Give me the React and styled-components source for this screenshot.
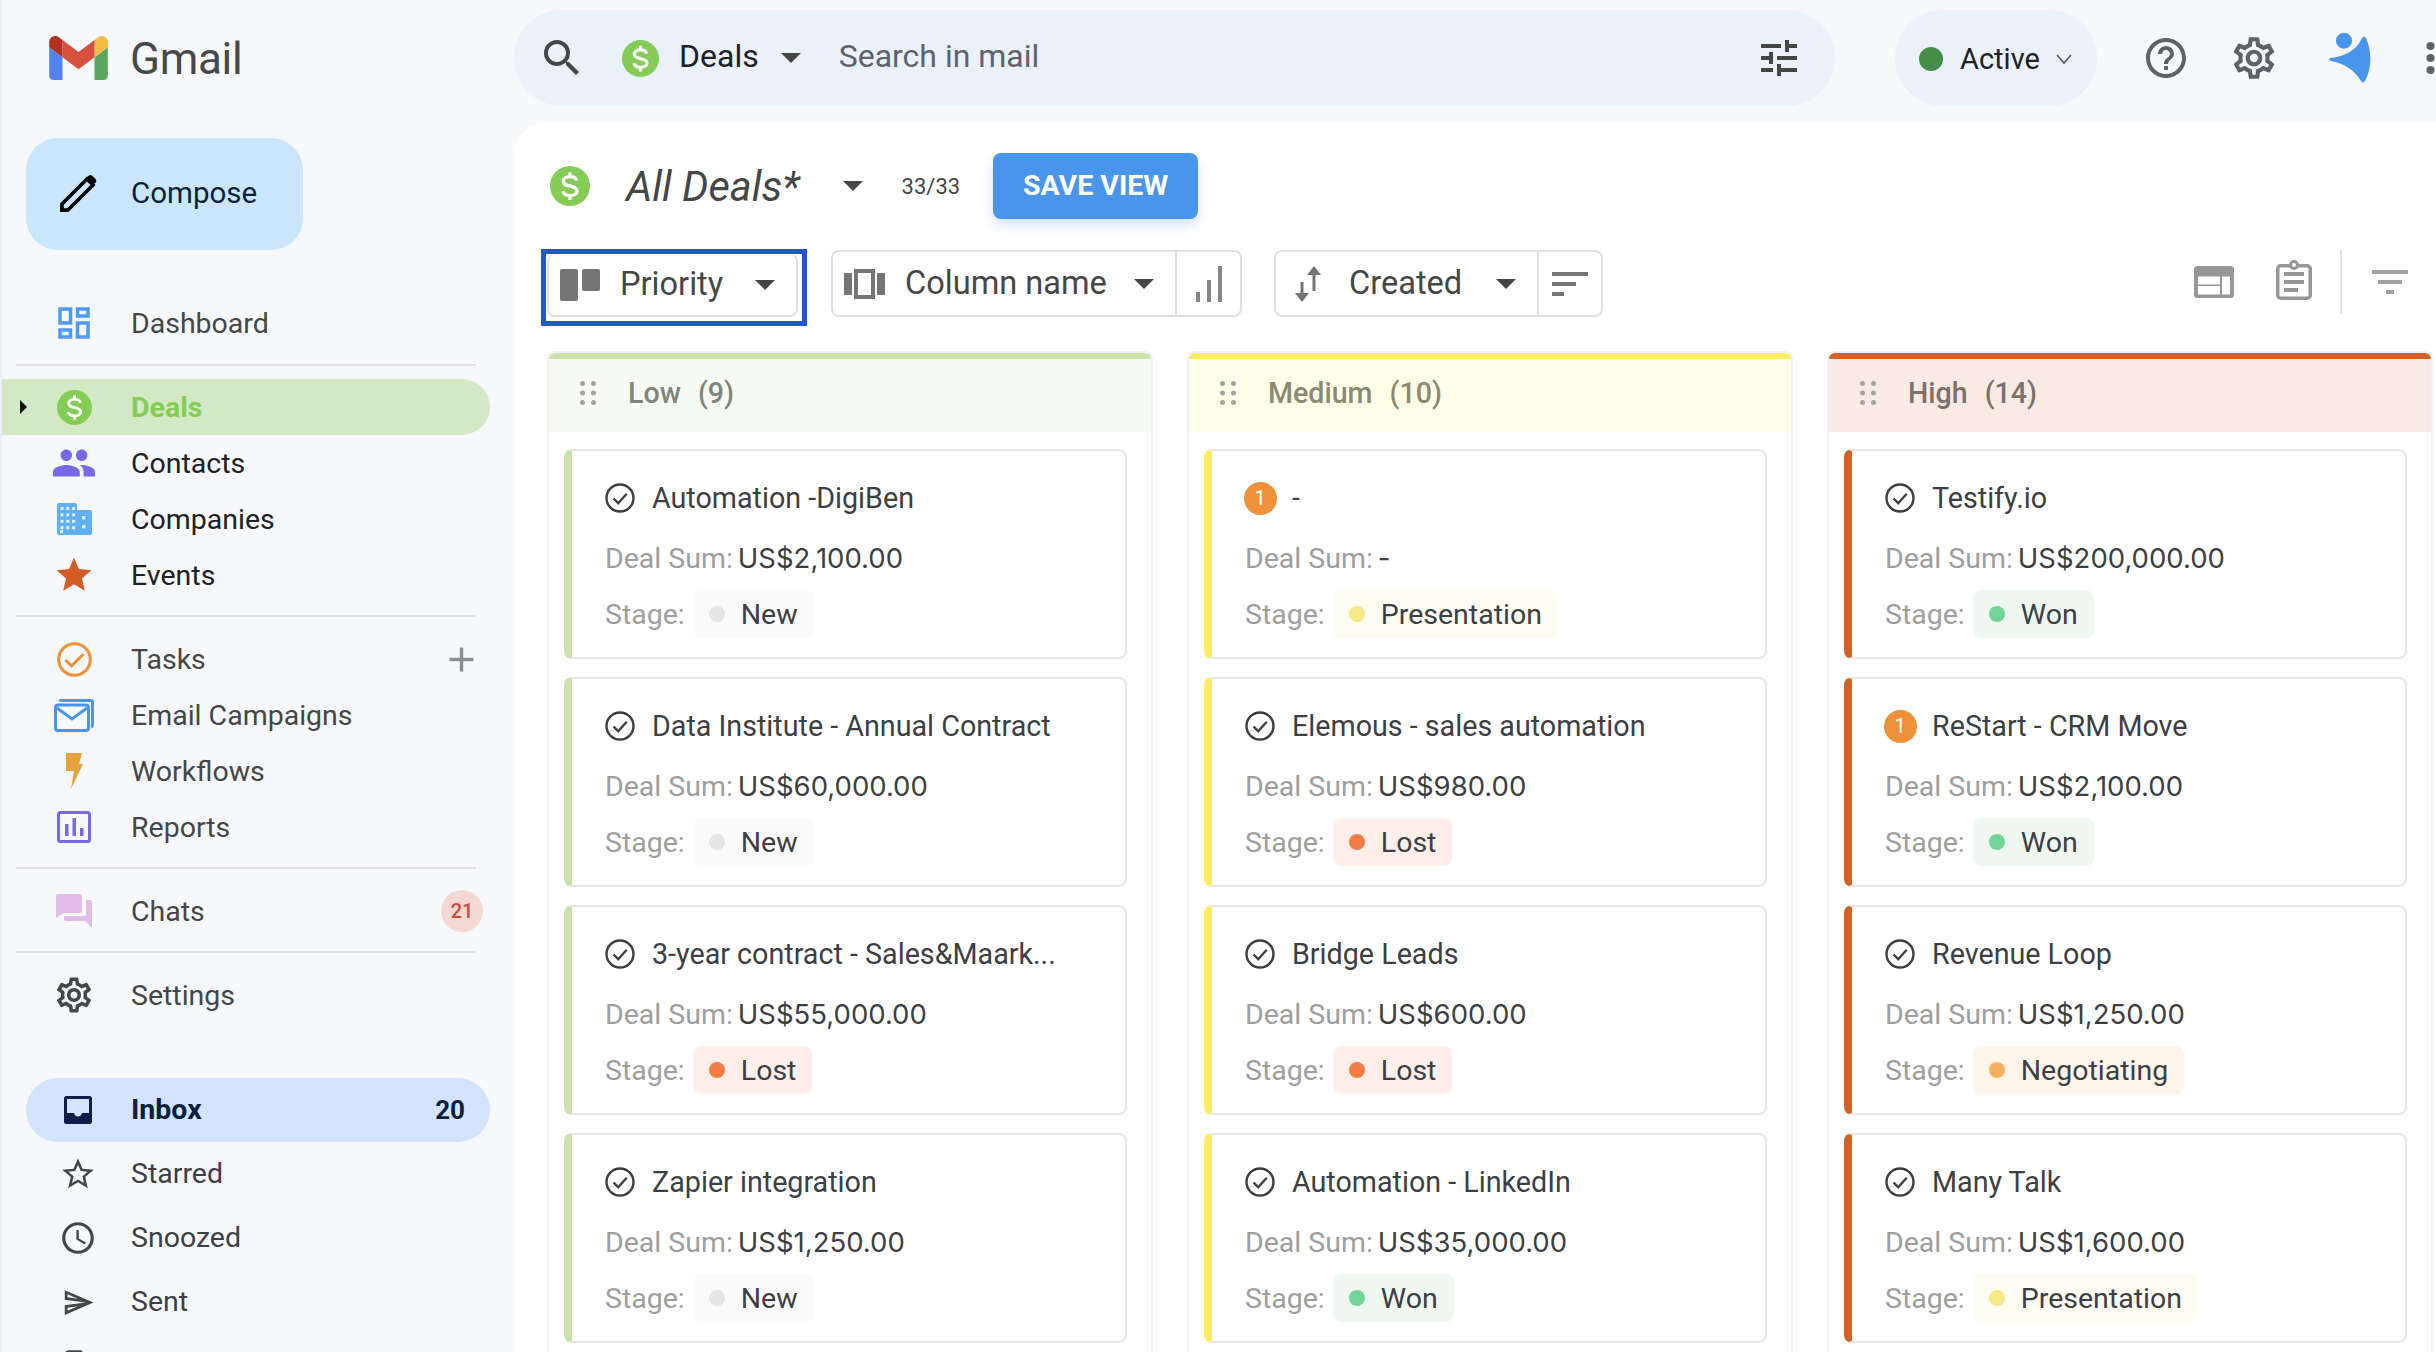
import styled, { createGlobalStyle } from 'styled-components';
import {
  MdAccessTime,
  MdAdd,
  MdHelpOutline,
  MdOutlineDashboard,
  MdOutlineInsertDriveFile,
  MdOutlineSend,
  MdOutlineSettings,
  MdPeople,
  MdSearch,
  MdStar,
  MdStarBorder,
  MdTune,
} from 'react-icons/md';

const GlobalStyle = createGlobalStyle`
  html, body {
    margin: 0;
    padding: 0;
    width: 2436px;
    height: 1352px;
    overflow: hidden;
    background: #f6f8fc;
    font-family: Roboto, "Liberation Sans", sans-serif;
    color: #3c4043;
  }
`;

const Page = styled.div`
  display: flex;
  width: 2436px;
  height: 1352px;
  overflow: hidden;
`;

/* sidebar */

const Sidebar = styled.aside`
  flex: 0 0 512px;
  border-left: 2px solid #e8f0fb;
  height: 1352px;
  overflow: hidden;
`;

const LogoRow = styled.div`
  display: flex;
  align-items: center;
  gap: 22px;
  height: 44px;
  padding: 36px 0 0 47px;
`;

const LogoText = styled.span`
  margin-top: 2px;
  font-size: 44px;
  line-height: 44px;
  color: #46494b;
  letter-spacing: -0.3px;
`;

const Compose = styled.button`
  display: flex;
  align-items: center;
  gap: 34px;
  width: 277px;
  height: 112px;
  margin: 58px 0 45px 24px;
  padding: 0 0 2px 34px;
  border: 0;
  border-radius: 32px;
  background: #c9e6fc;
  color: #0b1f3f;
  font: 400 29.5px Roboto, sans-serif;
`;

const NavRow = styled.div`
  position: relative;
  display: flex;
  align-items: center;
  gap: 37px;
  width: 488px;
  height: 56px;
  box-sizing: border-box;
  padding-left: 52px;
  font-size: 28.5px;
  color: ${({ $color }) => $color || '#444746'};
  font-weight: ${({ $bold }) => ($bold ? 700 : 400)};
  background: ${({ $bg }) => $bg || 'transparent'};
  border-radius: 0 28px 28px 0;
`;

const NavIcon = styled.span`
  flex: 0 0 40px;
  min-width: 0;
  display: flex;
  align-items: center;
  justify-content: center;
  height: 40px;
  color: ${({ $color }) => $color || '#444746'};

  svg {
    flex: none;
  }
`;

const NavLabel = styled.span`
  flex: 1;
`;

const RowArrow = styled.span`
  position: absolute;
  left: 18px;
  top: 21px;
  width: 0;
  height: 0;
  border-style: solid;
  border-width: 7px 0 7px 7px;
  border-color: transparent transparent transparent #111;
`;

const Divider = styled.div`
  width: 460px;
  height: 2px;
  margin: ${({ $my }) => $my || '12px'} 0 ${({ $my }) => $my || '14px'} 14px;
  background: #e0e0e0;
`;

const RowAdd = styled.span`
  display: flex;
  margin-right: 8px;
  color: #8b8d8f;
`;

const CountBadge = styled.span`
  width: 42px;
  height: 42px;
  margin-right: 7px;
  border-radius: 50%;
  background: #f4d8d4;
  color: #cb4b3b;
  font-size: 20px;
  font-weight: 500;
  line-height: 42px;
  text-align: center;
`;

const MailList = styled.div`
  margin-top: 55px;
`;

const MailRow = styled.div`
  display: flex;
  align-items: center;
  gap: 37px;
  width: 464px;
  height: 64px;
  box-sizing: border-box;
  margin-left: 24px;
  padding: 0 25px 0 36px;
  border-radius: 32px;
  font-size: 28.5px;
  font-weight: ${({ $active }) => ($active ? 700 : 400)};
  color: ${({ $active }) => ($active ? '#0b1f3f' : '#3c4043')};
  background: ${({ $active }) => ($active ? '#d3e3fd' : 'transparent')};
`;

const MailIcon = styled.span`
  flex: 0 0 32px;
  min-width: 0;
  display: flex;
  align-items: center;
  justify-content: center;
  color: #444746;

  svg {
    flex: none;
  }
`;

const MailLabel = styled.span`
  flex: 1;
  margin-top: -2px;
`;

const MailCount = styled.span`
  font-size: 26px;
  font-weight: 700;
`;

/* top bar */

const Main = styled.main`
  flex: 1;
  min-width: 0;
  display: flex;
  flex-direction: column;
`;

const TopBar = styled.header`
  flex: 0 0 112px;
  display: flex;
  align-items: flex-start;
  padding-top: 10px;
`;

const SearchBar = styled.div`
  display: flex;
  align-items: center;
  width: 1321px;
  height: 96px;
  box-sizing: border-box;
  padding: 0 32px 0 24px;
  border-radius: 48px;
  background: #eaf1fb;
  font-size: 32px;
`;

const SearchScope = styled.span`
  margin: -4px 22px 0 20px;
  color: #202124;
`;

const Caret = styled.span`
  flex: none;
  width: 0;
  height: 0;
  border-style: solid;
  border-width: 10px 10px 0;
  border-color: #444746 transparent transparent;
`;

const SearchHint = styled.span`
  flex: 1;
  margin: -4px 0 0 38px;
  color: #5f6368;
`;

const IconSlot = styled.span`
  display: flex;
  margin: ${({ $m }) => $m || 0};
  color: ${({ $color }) => $color || '#444746'};
`;

const StatusPill = styled.div`
  display: flex;
  align-items: center;
  width: 202px;
  height: 96px;
  box-sizing: border-box;
  margin: 0 45px 0 60px;
  padding: 2px 0 0 24px;
  border-radius: 48px;
  background: #eaf1fb;
  color: #202124;
  font-size: 29px;
`;

const StatusDot = styled.span`
  width: 24px;
  height: 24px;
  margin-right: 17px;
  border-radius: 50%;
  background: #458f4a;
`;

const TopIcons = styled.div`
  display: flex;
  align-items: center;
  height: 96px;
`;

/* board panel */

const Panel = styled.section`
  flex: 1;
  background: #fff;
  border-top-left-radius: 32px;
  overflow: hidden;
`;

const TitleRow = styled.div`
  display: flex;
  align-items: center;
  height: 66px;
  padding: 31px 0 0 36px;
`;

const ViewTitle = styled.h1`
  margin: 0 43px 0 36px;
  font-size: 41.5px;
  font-weight: 400;
  font-style: italic;
  color: #444746;
`;

const ViewCount = styled.span`
  margin: 0 33px 0 39px;
  font-size: 22px;
  color: #444746;
`;

const SaveButton = styled.button`
  width: 205px;
  height: 66px;
  padding: 0 0 2px;
  border: 0;
  border-radius: 8px;
  background: #4a95ec;
  color: #fff;
  font: 700 28.5px Roboto, sans-serif;
  box-shadow: 0 6px 12px rgba(74, 149, 236, 0.25);
`;

const Toolbar = styled.div`
  display: flex;
  align-items: flex-start;
  height: 77px;
  margin-top: 30px;
  padding-left: 27px;
`;

const Outline = styled.div`
  border: 5px solid #2255d0;
  padding: 0 4px 4px 1px;
`;

const ToolGroup = styled.div`
  display: flex;
  align-items: stretch;
  width: ${({ $w }) => $w}px;
  height: ${({ $h }) => $h || 67}px;
  box-sizing: border-box;
  margin: ${({ $m }) => $m || 0};
  border: 2px solid #e0e0e0;
  border-top-width: ${({ $flatTop }) => ($flatTop ? 0 : 2)}px;
  border-radius: 8px;
  font-size: 32.6px;
  color: #444746;
`;

const ToolMain = styled.div`
  flex: 1;
  display: flex;
  align-items: center;
  padding: 0 ${({ $pr }) => $pr || 21}px 0 ${({ $pl }) => $pl}px;
`;

const ToolLabel = styled.span`
  flex: 1;
  margin: -2px 0 0 ${({ $ml }) => $ml}px;
`;

const ToolEnd = styled.div`
  flex: 0 0 auto;
  width: ${({ $w }) => $w}px;
  display: flex;
  align-items: center;
  justify-content: center;
  border-left: 2px solid #e0e0e0;
`;

const ToolRight = styled.div`
  display: flex;
  align-items: center;
  height: 64px;
  margin: 1px 0 0 auto;
  padding-right: 28px;
`;

const VRule = styled.span`
  width: 2px;
  height: 64px;
  margin: 0 30px 0 28px;
  background: #e2e2e2;
`;

const Board = styled.div`
  display: grid;
  grid-template-columns: repeat(3, 606px);
  gap: 34px;
  margin-top: 25px;
  padding-left: 33px;
`;

const Column = styled.div`
  box-sizing: border-box;
  height: 1100px;
  border: 2px solid #f1f1f1;
  border-bottom: 0;
  border-radius: 8px 8px 0 0;
`;

const ColumnHead = styled.div`
  display: flex;
  align-items: center;
  height: 79px;
  box-sizing: border-box;
  padding: 0 0 5px 31px;
  border-top: 6px solid ${({ $accent }) => $accent};
  border-radius: 6px 6px 0 0;
  background: ${({ $tint }) => $tint};
  color: ${({ $ink }) => $ink};
  font-size: 28.6px;
  font-weight: 500;
`;

const ColumnName = styled.span`
  margin-left: 32px;
`;

const ColumnCount = styled.span`
  margin-left: 17px;
`;

const CardList = styled.div`
  display: flex;
  flex-direction: column;
  gap: 18px;
  padding: 17px 24px 0 15px;
`;

const Card = styled.article`
  height: 210px;
  box-sizing: border-box;
  padding: 27px 0 0 33px;
  border: 2px solid #e6e6e6;
  border-left: 8px solid ${({ $accent }) => $accent};
  border-radius: 8px;
  font-size: 28.5px;
  color: #3c4043;
`;

const CardTitle = styled.div`
  display: flex;
  align-items: center;
  gap: 17px;
  height: 40px;
  font-size: 28.7px;
`;

const NewBadge = styled.span`
  flex: none;
  width: 33px;
  height: 33px;
  margin: 0 -1.5px;
  border-radius: 50%;
  background: #ee9139;
  color: #fff;
  font-size: 20px;
  line-height: 33px;
  text-align: center;
`;

const SumRow = styled.div`
  display: flex;
  align-items: center;
  gap: 5px;
  height: 40px;
  margin-top: 20px;
`;

const SumValue = styled.span`
  font-family: Inter, Roboto, sans-serif;
  font-size: 27.5px;
`;

const FieldLabel = styled.span`
  color: #9e9e9e;
`;

const StageRow = styled.div`
  display: flex;
  align-items: center;
  gap: 8px;
  height: 48px;
  margin-top: 12px;
`;

const StagePill = styled.span`
  display: flex;
  align-items: center;
  gap: 16px;
  height: 48px;
  box-sizing: border-box;
  padding: 0 16px;
  border-radius: 8px;
  background: ${({ $tint }) => $tint};
`;

const StageDot = styled.span`
  width: 16px;
  height: 16px;
  border-radius: 50%;
  background: ${({ $color }) => $color};
`;

/* drawings */

function GmailLogo() {
  return (
    <svg width="59" height="44" viewBox="52 42 88 66">
      <path fill="#5383ec" d="M58 108h14V74L52 59v43c0 3.32 2.69 6 6 6" />
      <path fill="#58a75e" d="M120 108h14c3.32 0 6-2.69 6-6V59l-20 15" />
      <path fill="#f2bd42" d="M120 48v26l20-15v-8c0-7.42-8.47-11.65-14.4-7.2" />
      <path fill="#d85140" d="M72 74V48l24 18 24-18v26L96 92" />
      <path fill="#b23121" d="M52 51v8l20 15V48l-5.6-4.2c-5.94-4.45-14.4-.22-14.4 7.2" />
    </svg>
  );
}

function Pencil() {
  return (
    <svg width="37" height="37" viewBox="0 0 37 37">
      <path d="M2 35v-6L27 4l6 6L8 35z" fill="none" stroke="#000" strokeWidth="3.6" />
      <path d="M26 3l3-2.5q1.5-.8 3 0l3.8 3.8q1 1.6 0 3L33 10z" fill="#000" />
      <path d="M0 30l7 7H0z" fill="#000" />
    </svg>
  );
}

function Dollar({ size = 35 }) {
  return (
    <svg width={size} height={size} viewBox="0 0 36 36" style={{ flex: 'none' }}>
      <circle cx="18" cy="18" r="18" fill="#84cc55" />
      <path
        d="M24 13.2c-.6-2.4-3-3.6-6-3.6-3.3 0-6 1.6-6 4.2 0 5.8 12.400 3 12.400 8.600 0 2.700-2.900 4.200-6.400 4.200-3.300 0-5.800-1.500-6.400-4M18 5.600v4M18 26.600v4"
        fill="none"
        stroke="#fff"
        strokeWidth="3"
      />
    </svg>
  );
}

function Building() {
  const cells = [];
  for (let r = 0; r < 4; r++) for (let c = 0; c < 3; c++) cells.push([3.5 + c * 5.8, 4 + r * 6.4]);
  return (
    <svg width="35" height="32" viewBox="0 0 35 32">
      <path d="M2 0h16a2 2 0 0 1 2 2v5h13a2 2 0 0 1 2 2v21a2 2 0 0 1-2 2H2a2 2 0 0 1-2-2V2a2 2 0 0 1 2-2z" fill="#5fb0f7" />
      {cells.map(([x, y]) => (
        <rect key={`${x}-${y}`} x={x} y={y} width="3" height="3" fill="#e4f1fe" />
      ))}
      <rect x="25" y="13" width="3.4" height="3.4" fill="#e4f1fe" />
      <rect x="25" y="22" width="3.4" height="3.4" fill="#e4f1fe" />
      <rect x="3" y="27" width="3" height="3" fill="#e4f1fe" />
    </svg>
  );
}

function TaskCircle() {
  return (
    <svg width="35" height="35" viewBox="0 0 35 35" fill="none" stroke="#ee9139">
      <circle cx="17.5" cy="17.5" r="15.8" strokeWidth="3" />
      <path d="M8.5 18l6 6 12-12" strokeWidth="3" />
    </svg>
  );
}

function Campaign() {
  return (
    <svg width="40" height="33" viewBox="0 0 40 33" fill="none" stroke="#4a95ec" strokeWidth="3">
      <path d="M6 2.5q0-1 1-1h30q1.500 0 1.500 1.500v23q0 1.500-1.500 2" />
      <rect x="1.500" y="6" width="33" height="25.500" rx="2.500" />
      <path d="M3 9l15 11 15-11" />
    </svg>
  );
}

function Bolt() {
  return (
    <svg width="18" height="36" viewBox="0 0 18 36">
      <path d="M1 0h16l-3 11h4L6 36l3-18H1z" fill="#e8a23a" />
    </svg>
  );
}

function ReportBox() {
  return (
    <svg width="34" height="32" viewBox="0 0 34 32">
      <rect x="1.500" y="1.500" width="31" height="29" rx="2" fill="none" stroke="#7a68e8" strokeWidth="3" />
      <rect x="8" y="13" width="3.500" height="12" fill="#7a68e8" />
      <rect x="15.500" y="7" width="3.500" height="18" fill="#7a68e8" />
      <rect x="23" y="17" width="3.500" height="8" fill="#7a68e8" />
    </svg>
  );
}

function ChatBubbles() {
  return (
    <svg width="36" height="34" viewBox="0 0 36 34" fill="#e3bce8">
      <path d="M2 0h22a2 2 0 0 1 2 2v15a2 2 0 0 1-2 2H8l-8 5V2a2 2 0 0 1 2-2z" />
      <path d="M30 6h4a2 2 0 0 1 2 2v26l-7-7H10q-2 0-2-2v-3h21q1 0 1-1z" />
    </svg>
  );
}

function InboxGlyph() {
  return (
    <svg width="28" height="28" viewBox="0 0 28 28">
      <rect width="28" height="28" rx="2.500" fill="#0e1d4a" />
      <path d="M3 3h22v14h-7c-.6 2.400-2 3.500-4 3.500s-3.400-1.100-4-3.500H3z" fill="#d3e3fd" />
    </svg>
  );
}

function ThinChevron() {
  return (
    <svg width="16" height="10" viewBox="0 0 16 10" fill="none" stroke="#5f6368" strokeWidth="1.800">
      <path d="M1 1l7 8 7-8" />
    </svg>
  );
}

function BlueMark() {
  return (
    <svg width="42" height="52" viewBox="0 0 42 52" fill="#4a95ec">
      <circle cx="15" cy="8.700" r="8" />
      <path d="M1 26C12 25 27 20 33 6q2-3 4 0c6 14 6 30-1 43q-2 3-4 0C26 38 14 31 2 29q-3-1.500-1-3z" />
    </svg>
  );
}

function MoreDots() {
  return (
    <svg width="9" height="32" viewBox="0 0 9 32" fill="#5f6368">
      <circle cx="4.500" cy="4" r="4" />
      <circle cx="4.500" cy="16" r="4" />
      <circle cx="4.500" cy="28" r="4" />
    </svg>
  );
}

function PriorityGlyph() {
  return (
    <svg width="40" height="32" viewBox="0 0 40 32" fill="#757575">
      <rect width="18" height="32" rx="2" />
      <rect x="22" width="18" height="22" rx="2" />
    </svg>
  );
}

function ColumnGlyph() {
  return (
    <svg width="41" height="30" viewBox="0 0 41 30" fill="#757575">
      <rect x="0" y="4" width="8" height="22" />
      <rect x="33" y="4" width="8" height="22" />
      <rect x="12" y="2" width="17" height="26" fill="none" stroke="#757575" strokeWidth="4" />
    </svg>
  );
}

function BarsGlyph() {
  return (
    <svg width="26" height="36" viewBox="0 0 26 36" fill="#858585">
      <rect x="0" y="26" width="4" height="10" />
      <rect x="11" y="14" width="4" height="22" />
      <rect x="22" y="0" width="4" height="36" />
    </svg>
  );
}

function SortArrows() {
  return (
    <svg width="28" height="36" viewBox="0 0 28 36" fill="#757575">
      <rect x="6.500" y="16" width="3" height="14" />
      <path d="M1 27h14l-7 9z" />
      <rect x="18.500" y="8" width="3" height="17" />
      <path d="M13 9h14L20 0z" />
    </svg>
  );
}

function SortLines() {
  return (
    <svg width="36" height="24" viewBox="0 0 36 24" fill="#757575">
      <rect width="36" height="4" />
      <rect y="10" width="24" height="4" />
      <rect y="20" width="12" height="4" />
    </svg>
  );
}

function LayoutGlyph() {
  return (
    <svg width="40" height="32" viewBox="0 0 40 32">
      <rect width="40" height="32" rx="3.500" fill="#969696" />
      <rect x="4" y="10.500" width="22" height="8" fill="#fff" />
      <rect x="4" y="20" width="22" height="8.500" fill="#fff" />
      <rect x="28" y="10.500" width="8" height="18" fill="#fff" />
    </svg>
  );
}

function ClipboardGlyph() {
  return (
    <svg width="36" height="40" viewBox="0 0 36 40">
      <rect x="1.750" y="5.750" width="32.500" height="32.500" rx="3" fill="none" stroke="#969696" strokeWidth="3.500" />
      <circle cx="18" cy="5" r="5" fill="#969696" />
      <circle cx="18" cy="5" r="2" fill="#fff" />
      <rect x="8" y="12" width="20" height="4" fill="#969696" />
      <rect x="8" y="20" width="20" height="4" fill="#969696" />
      <rect x="8" y="28" width="14" height="4" fill="#969696" />
    </svg>
  );
}

function FilterGlyph() {
  return (
    <svg width="36" height="24" viewBox="0 0 36 24" fill="#a0a0a0">
      <rect width="36" height="4" />
      <rect x="6" y="10" width="24" height="4" />
      <rect x="14" y="20" width="8" height="4" />
    </svg>
  );
}

function Grip() {
  const dots = [0, 1, 2].flatMap((r) => [0, 1].map((c) => [2.500 + c * 11, 2.500 + r * 9.500]));
  return (
    <svg width="16" height="24" viewBox="0 0 16 24" fill="#a3a3a3">
      {dots.map(([x, y]) => (
        <circle key={`${x}-${y}`} cx={x} cy={y} r="2.500" />
      ))}
    </svg>
  );
}

function DoneMark() {
  return (
    <svg width="30" height="30" viewBox="0 0 30 30" fill="none" stroke="#3c4043" strokeWidth="2.400" style={{ flex: 'none' }}>
      <circle cx="15" cy="15" r="13.500" />
      <path d="M8.500 15.500l4.700 4.700 8.500-9.500" />
    </svg>
  );
}

/* data */

const stages = {
  New: { tint: '#fafafa', dot: '#e5e5e5' },
  Lost: { tint: '#fdeee9', dot: '#f17c45' },
  Won: { tint: '#eef8f1', dot: '#73d497' },
  Presentation: { tint: '#fefbf2', dot: '#f7e88a' },
  Negotiating: { tint: '#fdf4ea', dot: '#f4b05c' },
};

const columns = [
  {
    name: 'Low',
    count: 9,
    accent: '#cde2ab',
    tint: '#f7faf3',
    ink: '#80857a',
    deals: [
      { title: 'Automation -DigiBen', sum: 'US$2,100.00', stage: 'New' },
      { title: 'Data Institute - Annual Contract', sum: 'US$60,000.00', stage: 'New' },
      { title: '3-year contract - Sales&Maark...', sum: 'US$55,000.00', stage: 'Lost' },
      { title: 'Zapier integration', sum: 'US$1,250.00', stage: 'New' },
    ],
  },
  {
    name: 'Medium',
    count: 10,
    accent: '#fdeb60',
    tint: '#fffee9',
    ink: '#8b8a70',
    deals: [
      { title: '-', sum: '-', stage: 'Presentation', badge: true },
      { title: 'Elemous - sales automation', sum: 'US$980.00', stage: 'Lost' },
      { title: 'Bridge Leads', sum: 'US$600.00', stage: 'Lost' },
      { title: 'Automation - LinkedIn', sum: 'US$35,000.00', stage: 'Won' },
    ],
  },
  {
    name: 'High',
    count: 14,
    accent: '#d35f27',
    tint: '#f9ebe4',
    ink: '#7d706a',
    deals: [
      { title: 'Testify.io', sum: 'US$200,000.00', stage: 'Won' },
      { title: 'ReStart - CRM Move', sum: 'US$2,100.00', stage: 'Won', badge: true },
      { title: 'Revenue Loop', sum: 'US$1,250.00', stage: 'Negotiating' },
      { title: 'Many Talk', sum: 'US$1,600.00', stage: 'Presentation' },
    ],
  },
];

function Deal({ deal, accent }) {
  const stage = stages[deal.stage];
  return (
    <Card $accent={accent}>
      <CardTitle>
        {deal.badge ? <NewBadge>1</NewBadge> : <DoneMark />}
        <span>{deal.title}</span>
      </CardTitle>
      <SumRow>
        <FieldLabel>Deal Sum:</FieldLabel>
        <SumValue>{deal.sum}</SumValue>
      </SumRow>
      <StageRow>
        <FieldLabel>Stage:</FieldLabel>
        <StagePill $tint={stage.tint}>
          <StageDot $color={stage.dot} />
          {deal.stage}
        </StagePill>
      </StageRow>
    </Card>
  );
}

export default function App() {
  return (
    <Page>
      <GlobalStyle />
      <Sidebar>
        <LogoRow>
          <GmailLogo />
          <LogoText>Gmail</LogoText>
        </LogoRow>
        <Compose>
          <Pencil />
          Compose
        </Compose>

        <NavRow>
          <NavIcon $color="#4d9bf5"><MdOutlineDashboard size={42} /></NavIcon>
          <NavLabel>Dashboard</NavLabel>
        </NavRow>
        <Divider $my="13px" />
        <NavRow $bg="#d3e9c6" $color="#84cc55" $bold>
          <RowArrow />
          <NavIcon><Dollar /></NavIcon>
          <NavLabel>Deals</NavLabel>
        </NavRow>
        <NavRow $color="#202124">
          <NavIcon $color="#7a68e8"><MdPeople size={46} /></NavIcon>
          <NavLabel>Contacts</NavLabel>
        </NavRow>
        <NavRow $color="#202124">
          <NavIcon><Building /></NavIcon>
          <NavLabel>Companies</NavLabel>
        </NavRow>
        <NavRow $color="#202124">
          <NavIcon $color="#d35b26"><MdStar size={42} /></NavIcon>
          <NavLabel>Events</NavLabel>
        </NavRow>
        <Divider />
        <NavRow>
          <NavIcon><TaskCircle /></NavIcon>
          <NavLabel>Tasks</NavLabel>
          <RowAdd><MdAdd size={41} /></RowAdd>
        </NavRow>
        <NavRow>
          <NavIcon><Campaign /></NavIcon>
          <NavLabel>Email Campaigns</NavLabel>
        </NavRow>
        <NavRow>
          <NavIcon><Bolt /></NavIcon>
          <NavLabel>Workflows</NavLabel>
        </NavRow>
        <NavRow>
          <NavIcon><ReportBox /></NavIcon>
          <NavLabel>Reports</NavLabel>
        </NavRow>
        <Divider />
        <NavRow>
          <NavIcon><ChatBubbles /></NavIcon>
          <NavLabel>Chats</NavLabel>
          <CountBadge>21</CountBadge>
        </NavRow>
        <Divider />
        <NavRow>
          <NavIcon><MdOutlineSettings size={42} /></NavIcon>
          <NavLabel>Settings</NavLabel>
        </NavRow>

        <MailList>
          <MailRow $active>
            <MailIcon><InboxGlyph /></MailIcon>
            <MailLabel>Inbox</MailLabel>
            <MailCount>20</MailCount>
          </MailRow>
          <MailRow>
            <MailIcon><MdStarBorder size={38} /></MailIcon>
            <MailLabel>Starred</MailLabel>
          </MailRow>
          <MailRow>
            <MailIcon><MdAccessTime size={38} /></MailIcon>
            <MailLabel>Snoozed</MailLabel>
          </MailRow>
          <MailRow>
            <MailIcon><MdOutlineSend size={33} /></MailIcon>
            <MailLabel>Sent</MailLabel>
          </MailRow>
          <MailRow>
            <MailIcon><MdOutlineInsertDriveFile size={38} /></MailIcon>
          </MailRow>
        </MailList>
      </Sidebar>

      <Main>
        <TopBar>
          <SearchBar>
            <IconSlot><MdSearch size={48} /></IconSlot>
            <IconSlot $m="0 0 0 36px"><Dollar size={37} /></IconSlot>
            <SearchScope>Deals</SearchScope>
            <Caret />
            <SearchHint>Search in mail</SearchHint>
            <IconSlot><MdTune size={48} /></IconSlot>
          </SearchBar>
          <StatusPill>
            <StatusDot />
            Active
            <IconSlot $m="0 0 0 16px"><ThinChevron /></IconSlot>
          </StatusPill>
          <TopIcons>
            <IconSlot $color="#5f6368"><MdHelpOutline size={48} /></IconSlot>
            <IconSlot $m="0 0 0 39px" $color="#5f6368"><MdOutlineSettings size={50} /></IconSlot>
            <IconSlot $m="0 0 0 50px"><BlueMark /></IconSlot>
            <IconSlot $m="0 0 0 55px"><MoreDots /></IconSlot>
          </TopIcons>
        </TopBar>

        <Panel>
          <TitleRow>
            <Dollar size={40} />
            <ViewTitle>All Deals*</ViewTitle>
            <Caret />
            <ViewCount>33/33</ViewCount>
            <SaveButton>SAVE VIEW</SaveButton>
          </TitleRow>

          <Toolbar>
            <Outline>
              <ToolGroup $w={251} $h={63} $flatTop>
                <ToolMain $pl={11}>
                  <PriorityGlyph />
                  <ToolLabel $ml={20}>Priority</ToolLabel>
                  <Caret />
                </ToolMain>
              </ToolGroup>
            </Outline>
            <ToolGroup $w={411} $m="1px 0 0 24px">
              <ToolMain $pl={11}>
                <ColumnGlyph />
                <ToolLabel $ml={20}>Column name</ToolLabel>
                <Caret />
              </ToolMain>
              <ToolEnd $w={63}><BarsGlyph /></ToolEnd>
            </ToolGroup>
            <ToolGroup $w={329} $m="1px 0 0 32px">
              <ToolMain $pl={18}>
                <SortArrows />
                <ToolLabel $ml={27}>Created</ToolLabel>
                <Caret />
              </ToolMain>
              <ToolEnd $w={62}><SortLines /></ToolEnd>
            </ToolGroup>
            <ToolRight>
              <LayoutGlyph />
              <IconSlot $m="-4px 0 0 42px"><ClipboardGlyph /></IconSlot>
              <VRule />
              <FilterGlyph />
            </ToolRight>
          </Toolbar>

          <Board>
            {columns.map((col) => (
              <Column key={col.name}>
                <ColumnHead $accent={col.accent} $tint={col.tint} $ink={col.ink}>
                  <Grip />
                  <ColumnName>{col.name}</ColumnName>
                  <ColumnCount>({col.count})</ColumnCount>
                </ColumnHead>
                <CardList>
                  {col.deals.map((deal) => (
                    <Deal key={deal.title} deal={deal} accent={col.accent} />
                  ))}
                </CardList>
              </Column>
            ))}
          </Board>
        </Panel>
      </Main>
    </Page>
  );
}
